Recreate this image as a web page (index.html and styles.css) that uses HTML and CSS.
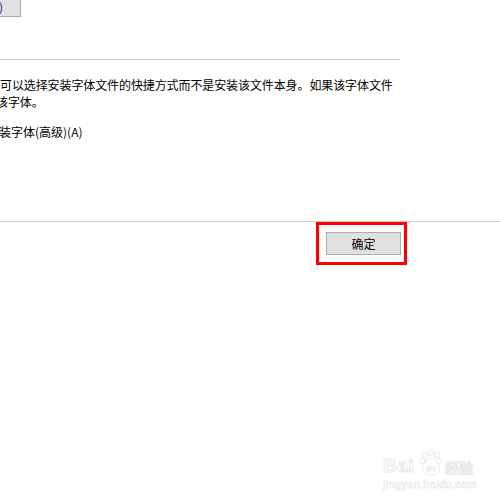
FILE: index.html
```html
<!DOCTYPE html>
<html>
<head>
<meta charset="utf-8">
<link rel="stylesheet" href="styles.css">
</head>
<body>
<div class="page">
  <div class="top">
    <div class="top-btn"><span class="top-btn-text">(R)</span></div>
  </div>
  <div class="rule"></div>
  <div class="desc">
    <div class="line l1">可以选择安装字体文件的快捷方式而不是安装该文件本身。如果该字体文件</div>
    <div class="line l2">该字体。</div>
  </div>
  <div class="option">装字体(高级)(A)</div>
  <div class="spacer"></div>
  <div class="sep"></div>
  <div class="footer">
    <div class="highlight">
      <div class="ok-btn">确定</div>
    </div>
  </div>
  <div class="watermark">
    <div class="wm-row">
      <span class="wm-bai">Bai</span>
      <svg class="wm-paw" width="22" height="27" viewBox="0 0 22 27">
        <g fill="#fff" stroke="#ebebeb" stroke-width="1">
          <ellipse cx="5" cy="6" rx="2.6" ry="3.2"/>
          <ellipse cx="11" cy="3.6" rx="2.6" ry="3"/>
          <ellipse cx="17" cy="6" rx="2.6" ry="3.2"/>
          <ellipse cx="2.8" cy="12" rx="2.2" ry="2.6"/>
          <ellipse cx="19.2" cy="12" rx="2.2" ry="2.6"/>
          <path d="M11 10 C6 10 2 16 2.5 21 C3 25 7 26 11 26 C15 26 19 25 19.5 21 C20 16 16 10 11 10 Z"/>
        </g>
        <text x="11" y="22" text-anchor="middle" font-family="Liberation Sans, sans-serif" font-size="8" font-weight="bold" fill="#fff" stroke="#e8e8e8" stroke-width="0.6">du</text>
      </svg>
      <span class="wm-jy">经验</span>
    </div>
    <div class="wm-url">jingyan.baidu.com</div>
  </div>
</div>
</body>
</html>
```
FILE: styles.css
```css
html, body {
  margin: 0;
  padding: 0;
  background: #ffffff;
}
.page {
  position: relative;
  width: 500px;
  height: 500px;
  overflow: hidden;
  font-family: "Noto Sans CJK SC", "Noto Sans", sans-serif;
  font-size: 12px;
  color: #000000;
}
.top {
  height: 17px;
  display: flex;
}
.top-btn {
  box-sizing: border-box;
  margin-left: -40px;
  width: 61px;
  height: 17px;
  background: #e1e1e1;
  border: 1px solid #adadad;
  border-top: none;
  display: flex;
  justify-content: flex-end;
  align-items: flex-end;
  padding-right: 17px;
  line-height: 17px;
  color: #1a1a6a;
}
.top-btn-text {
  margin-bottom: 1px;
}
.rule {
  margin-top: 42px;
  width: 400px;
  height: 1px;
  background: #cccccc;
}
.desc {
  margin-top: 16px;
}
.line {
  line-height: 17px;
  height: 17px;
  white-space: nowrap;
  letter-spacing: -0.1px;
}
.l1 {
  margin-left: 0px;
}
.l2 {
  margin-left: -4px;
}
.option {
  margin-top: 13px;
  line-height: 17px;
  height: 17px;
  margin-left: -1px;
  white-space: nowrap;
}
.spacer {
  height: 81px;
}
.sep {
  height: 1px;
  background: #cccccc;
  width: 500px;
}
.footer {
  display: flex;
  justify-content: flex-end;
  padding-right: 93px;
}
.highlight {
  border: 3px solid #ff0000;
  padding: 7px 3px 7px 7px;
}
.ok-btn {
  box-sizing: border-box;
  width: 75px;
  height: 23px;
  background: #e1e1e1;
  border: 1px solid #adadad;
  display: flex;
  align-items: center;
  justify-content: center;
  font-size: 12px;
  line-height: 21px;
}
.watermark {
  position: absolute;
  left: 383px;
  top: 448px;
  width: 100px;
}
.wm-row {
  display: flex;
  align-items: flex-end;
  height: 28px;
}
.wm-bai {
  font-family: "Liberation Sans", sans-serif;
  font-weight: bold;
  font-size: 19px;
  line-height: 19px;
  color: #ffffff;
  -webkit-text-stroke: 1px #e8e8e8;
  letter-spacing: 0.5px;
  margin-bottom: 1px;
}
.wm-paw {
  margin-left: 6px;
}
.wm-jy {
  font-size: 14px;
  line-height: 14px;
  color: #ffffff;
  -webkit-text-stroke: 1px #e8e8e8;
  margin-left: 3px;
  margin-bottom: 2px;
  font-weight: bold;
}
.wm-url {
  font-family: "Liberation Sans", sans-serif;
  font-size: 11px;
  line-height: 12px;
  color: #ffffff;
  -webkit-text-stroke: 0.8px #ececec;
  margin-top: 2px;
  letter-spacing: 0.3px;
}
```
